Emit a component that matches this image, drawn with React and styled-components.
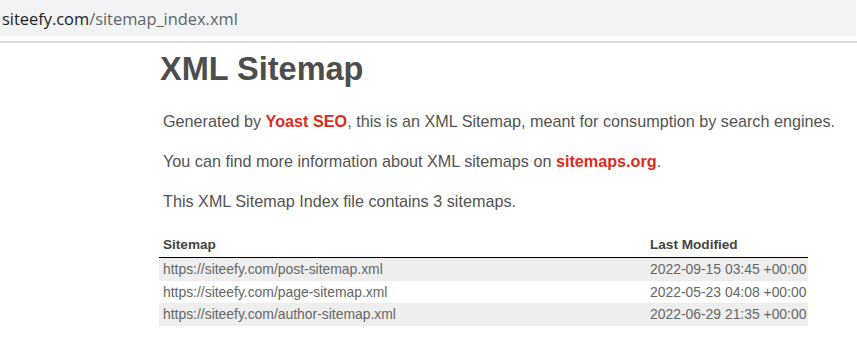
import React from 'react';
import styled, { createGlobalStyle } from 'styled-components';

const GlobalStyle = createGlobalStyle`
  body {
    margin: 0;
    background: #fff;
    font-family: "Liberation Sans", Arial, sans-serif;
  }
`;

// barre d'adresse du navigateur
const AddressBar = styled.div`
  height: 36px;
  background: #f1f3f4;
  display: flex;
  align-items: center;
  padding-left: 2px;
  margin-right: 1px;
  font-family: "Open Sans", "Noto Sans", sans-serif;
  font-size: 16.4px;
  color: #5f6368;
`;

const Host = styled.span`
  color: #202124;
`;

const Divider = styled.div`
  height: 2px;
  background: #dadce0;
  margin-top: 5px;
`;

const Content = styled.div`
  padding-left: 159px;
  width: 649px;
  color: #545353;
`;

const Title = styled.h1`
  margin: 6px 0 0 1px;
  font-size: 32.5px;
  line-height: 40px;
  font-weight: bold;
  color: #4d4d4d;
`;

const Text = styled.p`
  margin: ${(p) => p.$top || 0}px 0 0 4px;
  font-size: 16.2px;
  line-height: 20px;
  white-space: nowrap;
`;

const Link = styled.a`
  color: #dd2c1c;
  font-weight: bold;
  text-decoration: none;
`;

const Table = styled.table`
  margin-top: 26px;
  width: 649px;
  border-collapse: collapse;
  table-layout: fixed;
`;

const Th = styled.th`
  box-sizing: border-box;
  text-align: left;
  font-size: 13.6px;
  font-weight: bold;
  color: #444;
  padding: 0 4px 5px;
  border-bottom: 1px solid #000;
  width: ${(p) => p.$w || 'auto'};
`;

const Row = styled.tr`
  background: ${(p) => (p.$odd ? '#eee' : 'transparent')};
`;

const Td = styled.td`
  font-size: 13.9px;
  color: #666;
  height: 22.5px;
  padding: 0 4px;
  line-height: 16px;
  white-space: nowrap;
`;

const sitemaps = [
  ['https://siteefy.com/post-sitemap.xml', '2022-09-15 03:45 +00:00'],
  ['https://siteefy.com/page-sitemap.xml', '2022-05-23 04:08 +00:00'],
  ['https://siteefy.com/author-sitemap.xml', '2022-06-29 21:35 +00:00'],
];

const App = () => (
  <>
    <GlobalStyle />
    <AddressBar>
      <Host>siteefy.com</Host>/sitemap_index.xml
    </AddressBar>
    <Divider />
    <Content>
      <Title>XML Sitemap</Title>
      <Text $top={22}>
        Generated by <Link>Yoast SEO</Link>, this is an XML Sitemap, meant for consumption by search engines.
      </Text>
      <Text $top={20}>
        You can find more information about XML sitemaps on <Link>sitemaps.org</Link>.
      </Text>
      <Text $top={20}>This XML Sitemap Index file contains 3 sitemaps.</Text>
      <Table>
        <thead>
          <tr>
            <Th>Sitemap</Th>
            <Th $w="162px">Last Modified</Th>
          </tr>
        </thead>
        <tbody>
          {sitemaps.map(([url, date], i) => (
            <Row key={url} $odd={i % 2 === 0}>
              <Td>{url}</Td>
              <Td>{date}</Td>
            </Row>
          ))}
        </tbody>
      </Table>
    </Content>
  </>
);

export default App;
